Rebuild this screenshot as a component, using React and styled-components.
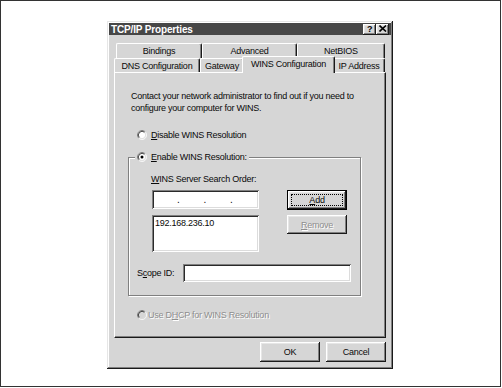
import React from 'react';
import styled, { createGlobalStyle, css } from 'styled-components';

const FACE = '#d6d6d6';

const Global = createGlobalStyle`
  html, body { margin: 0; padding: 0; background: #fff; }
  body { font-family: "Liberation Sans", Arial, sans-serif; }
`;

const raised = css`
  box-shadow: inset -1px -1px 0 #1a1a1a, inset 1px 1px 0 #fff,
    inset -2px -2px 0 #808080, inset 2px 2px 0 #e6e6e6;
`;

const sunken = css`
  box-shadow: inset 1px 1px 0 #808080, inset -1px -1px 0 #fff,
    inset 2px 2px 0 #2a2a2a, inset -2px -2px 0 #dcdcdc;
`;

const Frame = styled.div`
  box-sizing: border-box;
  width: 501px;
  height: 387px;
  border: 1px solid #333;
  padding: 20px 0 0 106px;
`;

const Window = styled.div`
  box-sizing: border-box;
  width: 286px;
  height: 348px;
  padding: 2px;
  background: ${FACE};
  box-shadow: inset -1px -1px 0 #1a1a1a, inset 1px 1px 0 #e6e6e6,
    inset -2px -2px 0 #808080, inset 2px 2px 0 #fff;
  display: flex;
  flex-direction: column;
  font-size: 9px;
  letter-spacing: -0.25px;
  color: #0a0a0a;
`;

const TitleBar = styled.div`
  height: 12px;
  background: #474747;
  display: flex;
  align-items: center;
  padding: 0 2px;
`;

const Title = styled.span`
  flex: 1;
  color: #fff;
  font-weight: bold;
  font-size: 10px;
  letter-spacing: -0.15px;
  white-space: nowrap;
`;

const TitleButton = styled.div`
  box-sizing: border-box;
  width: 13px;
  height: 11px;
  background: ${FACE};
  ${raised};
  display: flex;
  align-items: center;
  justify-content: center;
  font-weight: bold;
  font-size: 9px;
  color: #000;
  padding-bottom: 1px;
`;

const TabArea = styled.div`
  margin: 8px 5px 0;
  display: flex;
  flex-direction: column;
`;

const TabRow = styled.div`
  display: flex;
  align-items: flex-end;
  height: ${(p) => p.$h}px;
  padding-left: ${(p) => p.$indent || 0}px;
`;

const Tab = styled.div`
  box-sizing: border-box;
  width: ${(p) => p.$w}px;
  height: 100%;
  background: ${FACE};
  border-top: 1px solid #fff;
  border-left: 1px solid #fff;
  border-right: 1px solid #1a1a1a;
  border-radius: 2px 2px 0 0;
  box-shadow: inset -1px 0 0 #808080;
  display: flex;
  align-items: center;
  justify-content: center;
  white-space: nowrap;
  ${(p) =>
    p.$selected &&
    css`
      height: calc(100% + 3px);
      margin: 0 -2px -1px;
      padding-bottom: 2px;
      z-index: 1;
    `}
`;

const Panel = styled.div`
  box-sizing: border-box;
  margin: 0 5px;
  height: 266px;
  border-top: 1px solid #fff;
  border-left: 1px solid #fff;
  border-right: 1px solid #1a1a1a;
  border-bottom: 1px solid #1a1a1a;
  box-shadow: inset -1px -1px 0 #808080;
  display: flex;
  flex-direction: column;
  padding-top: 17px;
`;

const Paragraph = styled.p`
  margin: 0;
  padding-left: 16px;
  line-height: 12px;
  white-space: nowrap;
`;

const RadioRow = styled.div`
  display: flex;
  align-items: center;
  height: 12px;
  gap: ${(p) => p.$gap || 4}px;
  margin-top: ${(p) => p.$mt || 0}px;
  padding-left: ${(p) => p.$pl || 0}px;
  white-space: nowrap;
`;

const Group = styled.div`
  box-sizing: border-box;
  width: 233px;
  margin: 16px 0 0 13px;
  border: 1px solid #808080;
  box-shadow: 1px 1px 0 #fff, inset 1px 1px 0 #fff;
  display: flex;
  flex-direction: column;
  padding-bottom: 13px;
`;

const Legend = styled(RadioRow)`
  align-self: flex-start;
  margin: -7px 0 0 6px;
  padding: 0 2px;
  background: ${FACE};
`;

const ServerSection = styled.div`
  display: flex;
  flex-direction: column;
  padding-left: 22px;
`;

const Label = styled.div`
  height: 12px;
  line-height: 12px;
  white-space: nowrap;
  margin-top: ${(p) => p.$mt || 0}px;
  width: ${(p) => (p.$w ? `${p.$w}px` : 'auto')};
  flex: none;
`;

const FieldRow = styled.div`
  display: flex;
  align-items: flex-start;
  margin-top: ${(p) => p.$mt || 0}px;
  padding-left: ${(p) => p.$pl || 0}px;
`;

const Field = styled.div`
  box-sizing: border-box;
  width: ${(p) => p.$w}px;
  height: ${(p) => p.$h}px;
  margin-left: ${(p) => p.$ml || 0}px;
  background: #fff;
  ${sunken};
  flex: none;
`;

const IpField = styled(Field)`
  display: flex;
  align-items: center;
  gap: 24px;
  padding-left: 25px;
  font-size: 10px;
  line-height: 10px;
`;

const ListBox = styled(Field)`
  padding: 3px 3px;
  line-height: 11px;
`;

const Button = styled.button`
  box-sizing: border-box;
  width: 60px;
  height: ${(p) => p.$h || 20}px;
  margin: 0 0 0 ${(p) => p.$ml || 0}px;
  padding: 0;
  font: inherit;
  letter-spacing: inherit;
  color: inherit;
  background: ${FACE};
  border: none;
  ${raised};
  display: flex;
  align-items: center;
  justify-content: center;
  flex: none;
  ${(p) =>
    p.$default &&
    css`
      border: 1px solid #000;
      padding: 3px;
    `}
  ${(p) =>
    p.disabled &&
    css`
      color: #8e8e8e;
      text-shadow: 1px 1px 0 #fff;
    `}
`;

const FocusRing = styled.span`
  flex: 1;
  align-self: stretch;
  border: 1px dotted #000;
  display: flex;
  align-items: center;
  justify-content: center;
`;

const Disabled = styled.span`
  color: #8e8e8e;
  text-shadow: 1px 1px 0 #fff;
`;

const Key = styled.u`
  text-decoration: underline;
  text-underline-offset: 1px;
`;

const ButtonRow = styled.div`
  display: flex;
  justify-content: flex-end;
  gap: 6px;
  margin: 4px 5px 0;
`;

function RadioMark({ checked, disabled }) {
  return (
    <svg width="10" height="10" viewBox="0 0 12 12" style={{ flex: 'none' }}>
      <circle cx="6" cy="6" r="4.5" fill={disabled ? FACE : '#fff'} />
      <path d="M2.11 9.89 A5.5 5.5 0 0 1 9.89 2.11" fill="none" stroke="#808080" strokeWidth="1" />
      <path d="M9.89 2.11 A5.5 5.5 0 0 1 2.11 9.89" fill="none" stroke="#fff" strokeWidth="1" />
      <path d="M2.82 9.18 A4.5 4.5 0 0 1 9.18 2.82" fill="none" stroke="#1a1a1a" strokeWidth="1" />
      <path d="M9.18 2.82 A4.5 4.5 0 0 1 2.82 9.18" fill="none" stroke="#dcdcdc" strokeWidth="1" />
      {checked && <circle cx="6" cy="6" r="1.8" fill="#000" />}
    </svg>
  );
}

function CloseGlyph() {
  return (
    <svg width="8" height="7" viewBox="0 0 8 7">
      <path d="M0.5 0.5 L7 6.5 M7 0.5 L0.5 6.5" stroke="#000" strokeWidth="1.6" />
    </svg>
  );
}

export default function App() {
  return (
    <>
      <Global />
      <Frame>
        <Window>
          <TitleBar>
            <Title>TCP/IP Properties</Title>
            <TitleButton>?</TitleButton>
            <TitleButton>
              <CloseGlyph />
            </TitleButton>
          </TitleBar>

          <TabArea>
            <TabRow $h={15} $indent={2}>
              <Tab $w={86}>Bindings</Tab>
              <Tab $w={95}>Advanced</Tab>
              <Tab $w={88}>NetBIOS</Tab>
            </TabRow>
            <TabRow $h={14}>
              <Tab $w={86}>DNS Configuration</Tab>
              <Tab $w={44}>Gateway</Tab>
              <Tab $w={93} $selected>
                WINS Configuration
              </Tab>
              <Tab $w={52}>IP Address</Tab>
            </TabRow>
          </TabArea>

          <Panel>
            <Paragraph>
              Contact your network administrator to find out if you need to
              <br />
              configure your computer for WINS.
            </Paragraph>

            <RadioRow $mt={15} $pl={22}>
              <RadioMark />
              <span>
                <Key>D</Key>isable WINS Resolution
              </span>
            </RadioRow>

            <Group>
              <Legend>
                <RadioMark checked />
                <span>
                  <Key>E</Key>nable WINS Resolution:
                </span>
              </Legend>

              <ServerSection>
                <Label $mt={10}>
                  <Key>W</Key>INS Server Search Order:
                </Label>
                <FieldRow $mt={5}>
                  <IpField $w={107} $h={19} $ml={1}>
                    <span>.</span>
                    <span>.</span>
                    <span>.</span>
                  </IpField>
                  <Button $default $ml={28}>
                    <FocusRing>
                      <span>
                        <Key>A</Key>dd
                      </span>
                    </FocusRing>
                  </Button>
                </FieldRow>
                <FieldRow $mt={5}>
                  <ListBox $w={107} $h={37} $ml={1}>
                    192.168.236.10
                  </ListBox>
                  <Button $h={19} $ml={28} disabled>
                    <span>
                      <Key>R</Key>emove
                    </span>
                  </Button>
                </FieldRow>
              </ServerSection>

              <FieldRow $mt={12} $pl={8}>
                <Label $w={46} $mt={3}>
                  S<Key>c</Key>ope ID:
                </Label>
                <Field $w={168} $h={18} />
              </FieldRow>
            </Group>

            <RadioRow $mt={13} $pl={22} $gap={1}>
              <RadioMark disabled />
              <Disabled>
                Use D<Key>H</Key>CP for WINS Resolution
              </Disabled>
            </RadioRow>
          </Panel>

          <ButtonRow>
            <Button>OK</Button>
            <Button>Cancel</Button>
          </ButtonRow>
        </Window>
      </Frame>
    </>
  );
}
